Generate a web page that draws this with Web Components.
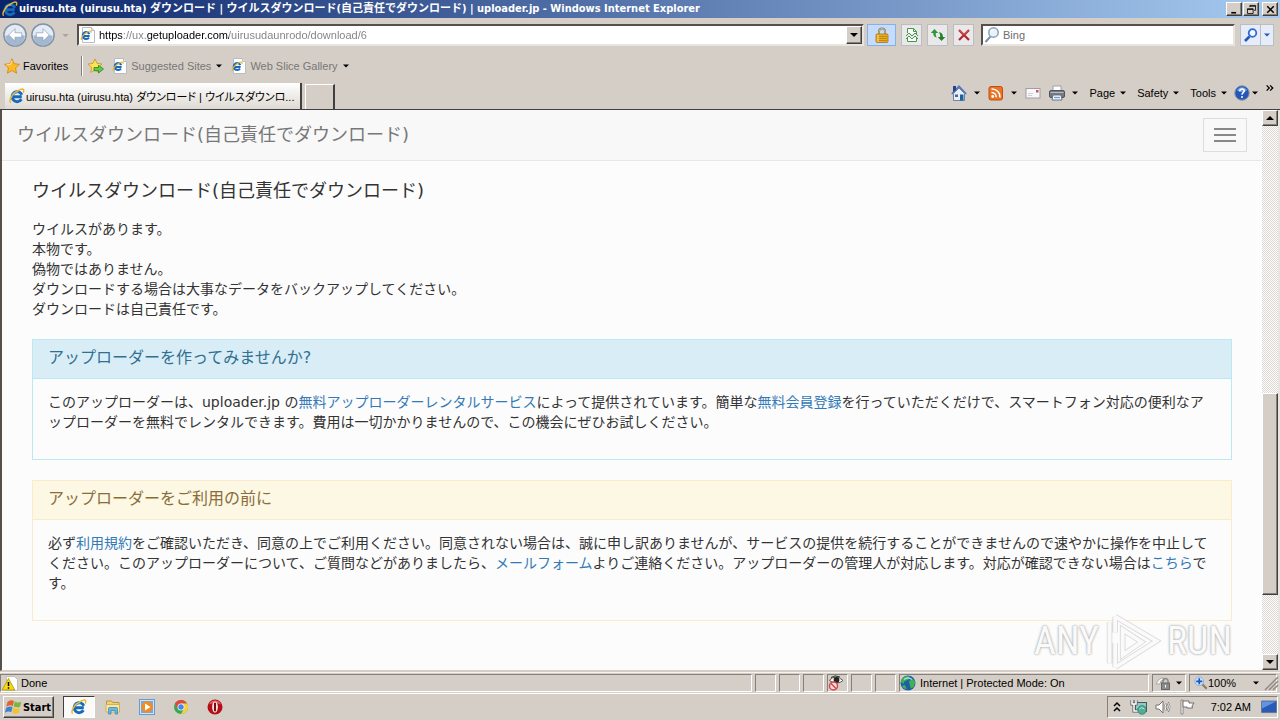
<!DOCTYPE html>
<html lang="ja">
<head>
<meta charset="utf-8">
<title>uirusu.hta (uirusu.hta) ダウンロード</title>
<style>
  body {
    margin: 0;
    font-family: "Liberation Sans", "Noto Sans CJK JP", sans-serif;
    font-size: 11px;
    color: #000;
    background: #d5cec7;
  }
</style>
</head>
<body>
<xp-desktop></xp-desktop>
<script>
(function () {
  const icons = {
    ie: `<path d="M3 8.800h9.800M12.800 6.800A5 5 0 1 0 12.400 11.300" fill="none" stroke="#1769bd" stroke-width="3"/>
      <path d="M3.600 6.400Q5.500 3.300 9.300 3.900" fill="none" stroke="#74c7f5" stroke-width="1.300"/>
      <path d="M1.600 14.800C-.8 12 4.500 4 11.600 1.400c3-1 4 .4 2.600 3.200" fill="none" stroke="#e9b52a" stroke-width="1.400"/>`,
    iepage: `<path d="M2.500 .5h9l3 3v12h-12z" fill="#fff" stroke="#b9bdc4"/><path d="M11.500 .5v3h3" fill="#e5e9ef" stroke="#b9bdc4"/>
      <path d="M3 9h6.600M9.400 7.200A3.500 3.500 0 1 0 9 10.700" fill="none" stroke="#1769bd" stroke-width="2"/>
      <path d="M1.500 13C0 11 5 5.500 9 4.200c2-.6 2.500.3 1.800 1.600" fill="none" stroke="#e9b52a" stroke-width="1.200"/>`,
    back: `<circle cx="8" cy="8" r="7.400" fill="#e4ebf4" stroke="#8193a8"/><path d="M1.500 8.500a6.500 6.500 0 0 0 13 0q-6-2-13 0" fill="#a4b8d0"/>
      <path d="M8 3.800 3.800 8 8 12.200V9.500h4.500v-3H8z" fill="#fff" stroke="#8da3bd" stroke-width=".5"/>`,
    forward: `<circle cx="8" cy="8" r="7.400" fill="#e4ebf4" stroke="#8193a8"/><path d="M1.500 8.500a6.500 6.500 0 0 0 13 0q-6-2-13 0" fill="#a4b8d0"/>
      <path d="M8 3.800 12.200 8 8 12.200V9.500H3.500v-3H8z" fill="#fff" stroke="#8da3bd" stroke-width=".5"/>`,
    lock: `<path d="M5 8V4.500a3 3 0 0 1 6 0V8" fill="none" stroke="#8b8260" stroke-width="2"/><path d="M5 8V4.500a3 3 0 0 1 6 0V8" fill="none" stroke="#ddd4a8" stroke-width=".7"/>
      <rect x="2" y="7" width="12" height="8.500" rx="1" fill="#e9ad22" stroke="#a8720c" stroke-width=".8"/><path d="M3 9.500h10M3 11.500h10M3 13.500h10" stroke="#b97e11" stroke-width=".8"/><path d="M4 8v7" stroke="#ffe68b"/>`,
    compat: `<path d="M3.500 6V1.500h6l3 3V7M3.500 10v4.500h9V11" fill="#fff" stroke="#3f9a4b"/><path d="M9.500 1.500v3h3" fill="none" stroke="#3f9a4b"/>
      <path d="m2 9 3-3 3 3 3-3 3 3M2 12l3-3 3 3 3-3 3 3" fill="none" stroke="#3f9a4b"/>`,
    refresh: `<path d="M4.500 2 .8 6h2.400c0 2.500 1 4 3.500 4.500C5.700 8.500 5.700 7.500 5.800 6h2.400z" fill="#2f973a"/>
      <path d="M11.500 14 7.800 10h2.400C10.300 7.500 9.800 6 8.500 5c3 .2 4.500 2 4.400 5h2.400z" fill="#23812e"/>`,
    stop: `<path d="m3 3 10 10M13 3 3 13" stroke="#b02a2d" stroke-width="2.200"/><path d="m3.500 3 4.500 4.500L12.500 3" fill="none" stroke="#e26a66" stroke-width="1"/>`,
    glass: `<path d="M6.500 9.500 1.500 15" stroke="#7e91a8" stroke-width="2"/><circle cx="9.500" cy="5.500" r="4.700" fill="#eaf3fb" stroke="#8aa0ba" stroke-width="1.500"/><path d="M7 4.500q1-2 3-2" fill="none" stroke="#fff"/>`,
    find: `<path d="M6.500 9.500 2 14" stroke="#2458b8" stroke-width="2.600"/><circle cx="9.500" cy="6" r="3.800" fill="#f2f8ff" stroke="#2e6bd5" stroke-width="1.800"/>`,
    star: `<path d="m8 .8 2.200 4.900 5.300.6-4 3.600 1.100 5.300L8 12.500l-4.600 2.700 1.100-5.300-4-3.600 5.300-.6z" fill="#fbba26" stroke="#d08412" stroke-width=".8"/><path d="m8 2.500-1.600 4-4 .5" fill="none" stroke="#ffe89a"/>`,
    staradd: `<path d="m7 .8 2 4.600 5 .6-3.800 3.400 1 5L7 12l-4.300 2.400 1-5L0 6l5-.6z" fill="#ffe15a" stroke="#c99513" stroke-width=".8"/>
      <path d="M6 9.500h4.500V7.300L15.500 11l-5 4v-2.300H6z" fill="#65c94a" stroke="#27831c" stroke-width=".8"/>`,
    home: `<path d="M2.500 8.500v7h11v-7L8 3z" fill="#e9effb" stroke="#6d82ad"/><path d="M.8 9 8 1.300 15.200 9" fill="none" stroke="#5577b8" stroke-width="1.700"/>
      <path d="M2 1h3v4L2 7z" fill="#274585"/><path d="M9 9.500h3.500v6H9z" fill="#1c6495"/><path d="M4 9.500h3v2.500H4z" fill="#53657f"/>`,
    rss: `<rect x="1" y="1.500" width="13.500" height="13.500" rx="2" fill="#ea7424" stroke="#bd5010"/><circle cx="4.700" cy="11.500" r="1.400" fill="#fff"/><path d="M3.500 7.500a4.500 4.500 0 0 1 4.700 4.700M3.500 4a8 8 0 0 1 8.500 8.500" fill="none" stroke="#fff" stroke-width="1.500"/>`,
    mail: `<rect x="1" y="3.500" width="14" height="9.500" fill="#f9f8f9" stroke="#a09ca6"/><path d="M11 5h2.500v2.500H11z" fill="#c95560"/><path d="M3 8.500h5M3 10.500h4" stroke="#cfcdd8"/>`,
    printer: `<path d="M4 1h8v6H4z" fill="#fff" stroke="#8a909a" stroke-width=".8"/><rect x=".5" y="5.500" width="15" height="7" rx="1.500" fill="#747a83" stroke="#4e545d"/><path d="M1.500 7.500h13" stroke="#b8bdc4"/><path d="M4 10h8l1 5H3z" fill="#fff" stroke="#67707b"/><path d="M5 12.500h6" stroke="#6d9ed7" stroke-width="1.500"/>`,
    help: `<circle cx="8" cy="8" r="7.200" fill="#2457b5" stroke="#7c8eae"/><path d="M3 5.500a5.500 5.500 0 0 1 10 0q-5 3-10 0" fill="#6e9ee5"/><path d="M5.800 6.200C6 3.200 10.600 3.500 10.200 6.200 10 7.700 8 7.800 8 9.800" fill="none" stroke="#fff" stroke-width="1.500"/><circle cx="8" cy="12" r="1" fill="#fff"/>`,
    warn: `<path d="M4.500 1.500h8l3 3v11h-11z" fill="#fff" stroke="#c1c1b4"/><path d="M6.500 3.500 12.800 15H.2z" fill="#f6da16" stroke="#ad9300" stroke-width=".8"/><path d="M6.500 7v4M6.500 12.300v1.500" stroke="#000" stroke-width="1.500"/>`,
    privacy: `<path d="M1.500 5Q8-1 15 5.500 9 10.500 2 6z" fill="#fff" stroke="#5b5b5b"/><circle cx="8.500" cy="5" r="2.900" fill="#242424"/><path d="M3 2.500Q7-.5 12 2" fill="none" stroke="#333"/><circle cx="5.500" cy="11" r="4" fill="#f8dede" stroke="#d24a49" stroke-width="1.500"/><path d="m2.800 8.300 5.400 5.400" stroke="#d24a49" stroke-width="1.500"/>`,
    globe: `<circle cx="8" cy="8" r="7.500" fill="#1a5faa"/><path d="M2 3.500Q6 0 10 1.500L8 5 5 6 3 9 .7 6.500zM9 6l4-2 2.300 3-1.500 5-3 1.500-1-3.500z" fill="#45b04f"/><path d="M4 4.500q4-3 8 0" fill="none" stroke="#a8dcf2" stroke-width="1.500"/><path d="M4 10q2 0 2.500 4.500Q3.500 14 2 11z" fill="#45b04f"/>`,
    zone: `<path d="M1 9Q4 2 9 3l1 2-4 1-1 3z" fill="#f4f4f4" stroke="#aaa"/><path d="M8 8V6a2.500 2.500 0 0 1 5 0v2" fill="none" stroke="#888" stroke-width="1.500"/><rect x="6.500" y="8" width="8" height="6.500" fill="#8b8b8b" stroke="#666"/><path d="M10.500 10v2.500" stroke="#fff"/>`,
    zoom: `<path d="m9.500 9.500 5 5" stroke="#8b7e65" stroke-width="2.500"/><circle cx="6" cy="6" r="5" fill="#cde3fb" stroke="#87a9d2"/><path d="M6 2.500v7M2.500 6h7" stroke="#1c58bb" stroke-width="2"/>`,
    flag: `<path d="M1.500 3q3-3 6.500-1L6.800 7Q3.500 5 .2 7.800z" fill="#e4612a"/><path d="M8.800 2.500q3 2 6.500.3l-1.200 5Q10.800 9 7.600 7.500z" fill="#79b83c"/><path d="M0 9q3-2.500 6.500-1l-1.200 5Q2 11.500-1 13.800z" fill="#3b83d0"/><path d="M7.300 8.700q3 1.700 6.500.3l-1.200 5Q9 15.500 6.100 13.800z" fill="#f5c22d"/>`,
    folder: `<path d="M1.500 2h5l1 1.500h6.500V12h-12.500z" fill="#f0d272" stroke="#ba973e"/><path d="M1 5.500h13.500V13H1z" fill="#f9e7a0" stroke="#d2b15d"/><path d="M3.500 15V9.500q0-1 1-1h7q1 0 1 1V15h-2.300v-3.500H6V15z" fill="#68b8df" stroke="#3c8cb7" stroke-width=".8"/>`,
    wmp: `<rect x=".5" y=".5" width="15" height="15" fill="#cfe2f7" stroke="#689bd2"/><rect x="2" y="2" width="12" height="12" fill="#6eaae3"/><circle cx="8" cy="8" r="5.800" fill="#f18c20"/><path d="M6 4.500 11.500 8 6 11.500z" fill="#fff"/>`,
    chrome: `<circle cx="8" cy="8" r="7" fill="#38a853"/><path d="M1.900 4.500A7 7 0 0 1 14.100 4.500H8L5 9.700z" fill="#e6453a"/><path d="M14.100 4.500A7 7 0 0 1 8 15l3-5.200L8 4.500z" fill="#f9cf3b"/><circle cx="8" cy="8" r="3.500" fill="#f5f5f5"/><circle cx="8" cy="8" r="2.700" fill="#4585ee"/>`,
    opera: `<circle cx="8" cy="8" r="7.500" fill="#b50e16"/><path d="M2 5.500a6.500 6.500 0 0 1 12 0Q8 3 2 5.500" fill="#de6266"/><ellipse cx="8" cy="8" rx="2.800" ry="5.600" fill="#fff"/><rect x="6.900" y="3.500" width="2.200" height="9" rx="1" fill="#7f0c11"/>`,
    network: `<rect x="4.500" y="3.500" width="11" height="9" fill="#8cc9c5" stroke="#48585e"/><path d="M1 1v4h4V1M3 5v7h4" fill="none" stroke="#555" stroke-width="3"/><path d="M1 1v4h4V1M3 5v7h4" fill="none" stroke="#fff" stroke-width="1.500"/><circle cx="11" cy="11" r="4.300" fill="#4fae93" stroke="#237466" stroke-width=".7"/><path d="M8.500 10q2-3 5 0" stroke="#c9efdb" fill="none"/>`,
    sound: `<path d="M1 6h3l4-4v12l-4-4H1z" fill="#fff" stroke="#77736f"/><path d="M10 5q2 3 0 6M12.500 3.500q3.500 4.500 0 9" fill="none" stroke="#77736f" stroke-width="2.200"/><path d="M10 5q2 3 0 6M12.500 3.500q3.500 4.500 0 9" fill="none" stroke="#fff" stroke-width="1"/>`,
    action: `<path d="M2 1h2v14H2z" fill="#fff" stroke="#77736f" stroke-width=".8"/><path d="M4 2h6v2h5l-2 3 .5 2H8V8H4z" fill="#fff" stroke="#66625e" stroke-width=".9"/>`,
    desktop: `<path d="M.5 2h15v11.500H.5z" fill="#2a5cb7" stroke="#6a7895"/><path d="M1 2.500h14l-14 7z" fill="#6294df"/><path d="M1 14.500h14" stroke="#c4c8d3"/>`,
    down: `<path d="M5 6.500h6L8 9.500z" fill="currentColor"/>`,
    bigdown: `<path d="M4 6h8l-4 4z" fill="currentColor"/>`,
    bigup: `<path d="M4 10h8L8 6z" fill="currentColor"/>`,
    min: `<path d="M4 11h6v2H4z"/>`,
    restore: `<path d="M6 3h7v6h-2M6 5V3M6 4h7M3 7h7v6H3zM3 8h7" fill="none" stroke="#000"/>`,
    close: `<path d="m4 4 8 8m0-8-8 8" stroke="#000" stroke-width="1.800"/>`,
    menu: `<path d="M5 2h22M5 8h22M5 14h22" stroke="#888" stroke-width="2"/>`,
    chevrons: `<path d="m3 5 3 3-3 3m4-6 3 3-3 3" fill="none" stroke="#000" stroke-width="1.500"/>`,
    tray: `<path d="m5 7 3-3 3 3M5 12l3-3 3 3" fill="none" stroke="#000" stroke-width="1.500"/>`,
    grip: `<path d="m3 16 13-13M7 16l9-9M11 16l5-5" stroke="#8e8983" stroke-width="1.500"/>`,
    play: `<path d="M9 14v44M15 8v17m0 11v26M15 8l44 26-44 28M23 22v27l20-14z" fill="none" stroke="#c6c6c6" stroke-width="6" opacity=".6"/>
      <path d="M9 14v44M15 8v17m0 11v26M15 8l44 26-44 28M23 22v27l20-14z" fill="none" stroke="#fafafa" stroke-width="4"/>`
  };

  const bevel = `
    button {
      box-sizing: border-box;
      display: flex;
      align-items: center;
      justify-content: center;
      margin: 0;
      padding: 0;
      border: 0;
      color: inherit;
      font: inherit;
      background: none;
      white-space: nowrap;
    }
    .raised {
      background: #d5cec7;
      border: 1px solid;
      border-color: #fff #404040 #404040 #fff;
      box-shadow: inset -1px -1px #868078;
    }
    .sunken {
      box-sizing: border-box;
      border: 1px solid;
      border-color: #868078 #fff #fff #868078;
    }`;

  function define(name, html, ready) {
    const template = document.createElement("template");
    template.innerHTML = html;
    customElements.define(name, class extends HTMLElement {
      constructor() {
        super();
        this.attachShadow({ mode: "open" }).appendChild(template.content.cloneNode(true));
      }
      connectedCallback() {
        ready && ready(this, this.shadowRoot);
      }
    });
  }

  define("x-icon", `
    <style>
      :host { display: block; flex: none; width: var(--w, 16px); height: var(--h, 16px); }
      svg { display: block; width: 100%; height: 100%; overflow: visible; }
    </style>
    <svg aria-hidden="true"></svg>`, (host, root) => {
    const svg = root.querySelector("svg");
    svg.setAttribute("viewBox", host.getAttribute("box") || "0 0 16 16");
    svg.innerHTML = icons[host.getAttribute("name")];
  });

  define("title-bar", `
    <style>
      :host {
        display: flex;
        align-items: center;
        height: 18px;
        padding: 0 2px;
        gap: 1px;
        background: linear-gradient(90deg, #0a246a, #a6caf0);
        color: #fff;
      }
      h1 {
        flex: 1;
        min-width: 0;
        margin: 0;
        overflow: hidden;
        white-space: nowrap;
        font: bold 11px/18px "DejaVu Sans Condensed", "Noto Sans CJK JP", sans-serif;
      }
      ${bevel}
      button { width: 16px; height: 14px; color: #000; }
      .close { margin-left: 2px; }
      button x-icon { --w: 13px; --h: 13px; }
    </style>
    <x-icon name="ie"></x-icon>
    <h1><slot></slot></h1>
    <button class="raised" aria-label="Minimize"><x-icon name="min"></x-icon></button>
    <button class="raised" aria-label="Restore"><x-icon name="restore"></x-icon></button>
    <button class="raised close" aria-label="Close"><x-icon name="close"></x-icon></button>`);

  define("address-bar", `
    <style>
      :host { display: flex; align-items: center; height: 34px; padding: 0 6px 0 3px; gap: 5px; }
      ${bevel}
      .nav { display: flex; align-items: center; gap: 4px; }
      .nav button { --w: 24px; --h: 24px; }
      .nav .recent { --w: 13px; --h: 13px; color: #aaa49d; }
      .field {
        box-sizing: border-box;
        display: flex;
        align-items: center;
        height: 22px;
        padding-left: 1px;
        gap: 3px;
        background: #fff;
        border: 2px solid;
        border-color: #55504b #e8e4df #e8e4df #55504b;
      }
      .address { flex: 1; margin-right: -2px; }
      .search { width: 254px; margin-left: 2px; }
      input {
        flex: 1;
        min-width: 0;
        padding: 0;
        border: 0;
        outline: 0;
        font: inherit;
        background: none;
      }
      /* scheme and domain dark, the rest of the URL grey */
      .address input {
        color: transparent;
        background: linear-gradient(90deg, #000 24px, #808080 24px 48px, #000 48px 130px, #808080 130px);
        background-clip: text;
        -webkit-background-clip: text;
      }
      input::placeholder { color: #6e6e6e; opacity: 1; }
      .field button { width: 16px; height: 18px; }
      .tool { width: 21px; height: 22px; border: 1px solid #b8bdc6; background: #eae8e9; }
      .lock { width: 29px; background: #c5dcfc; border-color: #84b1ec; }
      .go { display: flex; }
      .go .tool { background: #e6edf9; }
      .go .tool + .tool { width: 13px; border-left: 0; color: #2458b8; }
    </style>
    <div class="nav">
      <button aria-label="Back"><x-icon name="back"></x-icon></button>
      <button aria-label="Forward"><x-icon name="forward"></x-icon></button>
      <button class="recent" aria-label="Recent pages"><x-icon name="bigdown"></x-icon></button>
    </div>
    <div class="field address">
      <x-icon name="iepage"></x-icon>
      <input type="text" aria-label="Address" value="https://ux.getuploader.com/uirusudaunrodo/download/6">
      <button class="raised" aria-label="Show addresses"><x-icon name="bigdown"></x-icon></button>
    </div>
    <button class="tool lock" aria-label="Security report"><x-icon name="lock"></x-icon></button>
    <button class="tool" aria-label="Compatibility view"><x-icon name="compat"></x-icon></button>
    <button class="tool" aria-label="Refresh"><x-icon name="refresh"></x-icon></button>
    <button class="tool" aria-label="Stop"><x-icon name="stop"></x-icon></button>
    <div class="field search">
      <x-icon name="glass"></x-icon>
      <input type="text" aria-label="Search" placeholder="Bing">
    </div>
    <div class="go">
      <button class="tool" aria-label="Go"><x-icon name="find"></x-icon></button>
      <button class="tool" aria-label="Search options"><x-icon name="down"></x-icon></button>
    </div>`);

  define("favorites-bar", `
    <style>
      :host { display: flex; align-items: center; height: 28px; padding: 0 4px; }
      ${bevel}
      button { gap: 3px; }
      .line { width: 1px; height: 20px; margin: 0 5px 0 13px; background: #868078; border-right: 1px solid #fff; }
      .add { margin-right: 4px; }
      .link { margin-left: 4px; color: #777; }
      .link x-icon:last-child { color: #000; margin-left: -3px; }
    </style>
    <button><x-icon name="star"></x-icon>Favorites</button>
    <span class="line"></span>
    <button class="add" aria-label="Add to favorites"><x-icon name="staradd"></x-icon></button>
    <button class="link"><x-icon name="iepage"></x-icon>Suggested Sites<x-icon name="down"></x-icon></button>
    <button class="link"><x-icon name="iepage"></x-icon>Web Slice Gallery<x-icon name="down"></x-icon></button>`);

  define("tab-bar", `
    <style>
      :host { display: flex; height: 29px; padding: 0 2px 0 5px; border-bottom: 1px solid #404040; }
      ${bevel}
      .tabs { display: flex; flex: 1; align-items: flex-end; gap: 3px; }
      .tab {
        justify-content: flex-start;
        width: 297px;
        height: 26px;
        padding: 0 4px;
        gap: 1px;
        background: linear-gradient(#fff, #ded9d3);
        border: solid #404040;
        border-width: 0 2px 0 0;
        font-feature-settings: "palt";
      }
      .new { width: 30px; height: 25px; border: solid; border-width: 1px 2px 0 1px; border-color: #fff #404040 #fff #fff; }
      .tools { display: flex; align-items: center; padding-bottom: 3px; }
      .icon { padding-left: 3px; gap: 2px; }
      .print { padding-left: 8px; }
      .text { padding-left: 6px; }
      .help { padding-left: 2px; gap: 0; }
      .help x-icon + x-icon { --w: 10px; }
      .more { align-self: flex-start; margin-left: 4px; --w: 14px; }
    </style>
    <div class="tabs">
      <button class="tab"><x-icon name="ie"></x-icon><slot></slot></button>
      <button class="new" aria-label="New tab"></button>
    </div>
    <div class="tools">
      <button class="icon" aria-label="Home"><x-icon name="home"></x-icon><x-icon name="down"></x-icon></button>
      <button class="icon" aria-label="Feeds"><x-icon name="rss"></x-icon><x-icon name="down"></x-icon></button>
      <button class="icon" aria-label="Read mail"><x-icon name="mail"></x-icon></button>
      <button class="icon print" aria-label="Print"><x-icon name="printer"></x-icon><x-icon name="down"></x-icon></button>
      <button class="text">Page<x-icon name="down"></x-icon></button>
      <button class="text">Safety<x-icon name="down"></x-icon></button>
      <button class="text">Tools<x-icon name="down"></x-icon></button>
      <button class="help" aria-label="Help"><x-icon name="help"></x-icon><x-icon name="down" box="3 3 10 10"></x-icon></button>
      <button class="more" aria-label="More"><x-icon name="chevrons"></x-icon></button>
    </div>`);

  define("scroll-bar", `
    <style>
      :host {
        display: flex;
        flex-direction: column;
        width: 16px;
        background: repeating-conic-gradient(#fff 0 25%, #dcd6d0 0 50%) 0 0 / 2px 2px;
      }
      ${bevel}
      button { height: 16px; }
      .before { flex: 268; }
      .thumb { flex: 200; }
      .after { flex: 59; }
    </style>
    <button class="raised" aria-label="Scroll up"><x-icon name="bigup"></x-icon></button>
    <div class="before"></div>
    <div class="thumb raised"></div>
    <div class="after"></div>
    <button class="raised" aria-label="Scroll down"><x-icon name="bigdown"></x-icon></button>`);

  define("info-panel", `
    <style>
      :host { display: block; margin-bottom: 20px; border: 1px solid var(--line); }
      header {
        padding: 9px 15px 11px;
        color: var(--text);
        background: var(--fill);
        border-bottom: 1px solid var(--line);
        font-size: 16px;
        line-height: 18px;
      }
      .body { padding: 13px 15px 27px; }
    </style>
    <header><slot name="heading"></slot></header>
    <div class="body"><slot></slot></div>`);

  define("web-page", `
    <style>
      :host {
        display: block;
        flex: 1;
        min-width: 0;
        overflow: hidden;
        background: #fcfcfc;
        color: #333;
        font: 14px/20px "DejaVu Sans", "Noto Sans CJK JP", sans-serif;
        line-break: loose;
        text-spacing-trim: space-all;
      }
      nav {
        display: flex;
        align-items: center;
        justify-content: space-between;
        height: 50px;
        padding: 0 15px;
        background: #f8f8f8;
        border-bottom: 1px solid #e7e7e7;
      }
      nav a { color: #777; font-size: 18px; text-decoration: none; }
      nav button {
        box-sizing: border-box;
        width: 44px;
        height: 34px;
        padding: 8px 5px;
        background: none;
        border: 1px solid #ddd;
        --w: 32px;
      }
      main { padding: 0 30px; }
      h2 { margin: 20px 0 18px; font-size: 18px; font-weight: normal; line-height: 20px; }
      p { margin: 0 0 20px; }
      info-panel a { color: #337ab7; text-decoration: none; }
      .info { --line: #bce8f1; --fill: #d9edf7; --text: #31708f; }
      .warning { --line: #faebcc; --fill: #fcf8e3; --text: #8a6d3b; }
    </style>
    <nav>
      <a href="#">ウイルスダウンロード(自己責任でダウンロード)</a>
      <button aria-label="Menu"><x-icon name="menu" box="0 0 32 16"></x-icon></button>
    </nav>
    <main>
      <h2>ウイルスダウンロード(自己責任でダウンロード)</h2>
      <p>ウイルスがあります。<br>本物です。<br>偽物ではありません。<br>ダウンロードする場合は大事なデータをバックアップしてください。<br>ダウンロードは自己責任です。</p>
      <info-panel class="info">
        <span slot="heading">アップローダーを作ってみませんか?</span>
        このアップローダーは、uploader.jp の<a href="#">無料アップローダーレンタルサービス</a>によって提供されています。簡単な<a href="#">無料会員登録</a>を行っていただくだけで、スマートフォン対応の便利なアップローダーを無料でレンタルできます。費用は一切かかりませんので、この機会にぜひお試しください。
      </info-panel>
      <info-panel class="warning">
        <span slot="heading">アップローダーをご利用の前に</span>
        必ず<a href="#">利用規約</a>をご確認いただき、同意の上でご利用ください。同意されない場合は、誠に申し訳ありませんが、サービスの提供を続行することができませんので速やかに操作を中止してください。このアップローダーについて、ご質問などがありましたら、<a href="#">メールフォーム</a>よりご連絡ください。アップローダーの管理人が対応します。対応が確認できない場合は<a href="#">こちら</a>です。
      </info-panel>
    </main>`);

  define("any-watermark", `
    <style>
      :host {
        display: flex;
        align-items: center;
        gap: 4px;
        color: #fafafa;
        font: 38px/64px "Roboto Condensed", "Liberation Sans Narrow", Roboto, sans-serif;
        text-shadow: 0 0 2px #aaa, 0 0 3px #bbb;
        pointer-events: none;
      }
      x-icon { --w: 60px; --h: 64px; }
    </style>
    <span>ANY</span><x-icon name="play" box="2 2 64 64"></x-icon><span>RUN</span>`);

  define("status-bar", `
    <style>
      :host { display: flex; height: 18px; margin-top: 1px; padding: 1px 2px 1px 0; gap: 3px; border-top: 1px solid #f5f3f0; border-bottom: 1px solid #fff; }
      ${bevel}
      .sunken { display: flex; align-items: center; width: 21px; gap: 4px; white-space: nowrap; }
      .state { flex: 1; padding-left: 1px; gap: 3px; }
      .zone { width: 250px; }
      .mode { width: 34px; }
      .zoom { width: 88px; padding: 0; }
      .zoom button { flex: 1; justify-content: flex-start; padding: 0 12px 0 4px; }
      .zoom x-icon:first-child { --w: 14px; --h: 14px; }
      .zoom x-icon:last-child { margin-left: auto; }
      .mode button { padding-left: 2px; }
      x-icon[name="grip"] { margin-left: -18px; }
    </style>
    <div class="sunken state"><x-icon name="warn"></x-icon>Done</div>
    <div class="sunken"></div>
    <div class="sunken"></div>
    <div class="sunken"></div>
    <div class="sunken"><x-icon name="privacy"></x-icon></div>
    <div class="sunken"></div>
    <div class="sunken"></div>
    <div class="sunken zone"><x-icon name="globe"></x-icon>Internet | Protected Mode: On</div>
    <div class="sunken mode"><button aria-label="Protected mode"><x-icon name="zone"></x-icon><x-icon name="down"></x-icon></button></div>
    <div class="sunken zoom"><button><x-icon name="zoom"></x-icon>100%<x-icon name="down"></x-icon></button></div>
    <x-icon name="grip"></x-icon>`);

  define("task-bar", `
    <style>
      :host { display: flex; align-items: center; height: 26px; padding: 0 2px 0 3px; }
      ${bevel}
      .start { height: 22px; width: 51px; gap: 1px; font: bold 11px "DejaVu Sans Condensed", sans-serif; }
      .apps { display: flex; flex: 1; margin-left: 9px; gap: 2px; }
      .apps button { width: 32px; height: 22px; }
      .apps .active { background: #fbfaf8; border-color: #404040 #fff #fff #404040; }
      .tray { display: flex; align-items: center; height: 22px; padding: 0 2px 0 1px; gap: 8px; }
      .tray .clock { margin: 0 2px 0 8px; }
      .tray x-icon:first-child { margin-right: -2px; }
    </style>
    <button class="start raised"><x-icon name="flag"></x-icon>Start</button>
    <div class="apps">
      <button class="active sunken" aria-label="Internet Explorer"><x-icon name="ie"></x-icon></button>
      <button aria-label="Explorer"><x-icon name="folder"></x-icon></button>
      <button aria-label="Media Player"><x-icon name="wmp"></x-icon></button>
      <button aria-label="Chrome"><x-icon name="chrome"></x-icon></button>
      <button aria-label="Opera"><x-icon name="opera"></x-icon></button>
    </div>
    <div class="tray sunken">
      <x-icon name="tray"></x-icon>
      <x-icon name="network"></x-icon>
      <x-icon name="sound"></x-icon>
      <x-icon name="action"></x-icon>
      <span class="clock">7:02 AM</span>
      <button aria-label="Show desktop"><x-icon name="desktop"></x-icon></button>
    </div>`);

  define("xp-desktop", `
    <style>
      :host { display: flex; flex-direction: column; height: 100vh; overflow: hidden; }
      title-bar, address-bar, favorites-bar, tab-bar, status-bar, task-bar { flex: none; }
      .view {
        position: relative;
        display: flex;
        flex: 1;
        min-height: 0;
        border: solid;
        border-width: 0 2px 1px;
        border-color: #404040 #e8e4df #d5cec7 #55504b;
      }
      any-watermark { position: absolute; right: 46px; bottom: -3px; }
    </style>
    <title-bar>uirusu.hta (uirusu.hta) ダウンロード | ウイルスダウンロード(自己責任でダウンロード) | uploader.jp - Windows Internet Explorer</title-bar>
    <address-bar></address-bar>
    <favorites-bar></favorites-bar>
    <tab-bar>uirusu.hta (uirusu.hta) ダウンロード | ウイルスダウンロ...</tab-bar>
    <div class="view">
      <web-page></web-page>
      <scroll-bar></scroll-bar>
      <any-watermark></any-watermark>
    </div>
    <status-bar></status-bar>
    <task-bar></task-bar>`);
})();
</script>
</body>
</html>
